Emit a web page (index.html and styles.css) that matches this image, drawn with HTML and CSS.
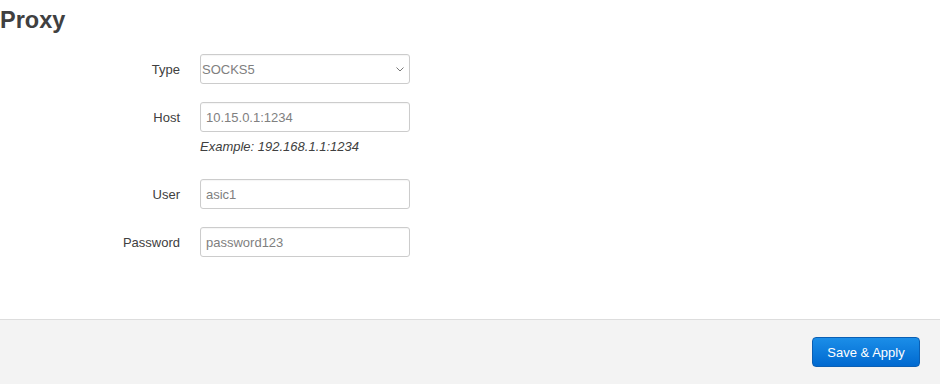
FILE: index.html
```html
<!DOCTYPE html>
<html lang="en">
<head>
  <meta charset="UTF-8">
  <meta name="viewport" content="width=device-width, initial-scale=1.0">
  <title>Proxy</title>
  <link rel="stylesheet" href="styles.css">
</head>
<body>
  <div class="page">

    <!-- Proxy settings -->
    <div class="section">
      <h2>Proxy</h2>

      <div class="form">
        <div class="row">
          <label for="type">Type</label>
          <div class="field">
            <div class="select-wrap">
              <select id="type">
                <option>SOCKS5</option>
                <option>HTTP</option>
              </select>
              <svg class="caret" width="8" height="5" viewBox="0 0 8 5"><path d="M0.5 0.5 L4 4 L7.5 0.5" fill="none" stroke="#777" stroke-width="1"/></svg>
            </div>
          </div>
        </div>

        <div class="row">
          <label for="host">Host</label>
          <div class="field">
            <input type="text" id="host" value="10.15.0.1:1234">
            <div class="hint">Example: 192.168.1.1:1234</div>
          </div>
        </div>

        <div class="row">
          <label for="user">User</label>
          <div class="field">
            <input type="text" id="user" value="asic1">
          </div>
        </div>

        <div class="row">
          <label for="password">Password</label>
          <div class="field">
            <input type="text" id="password" value="password123">
          </div>
        </div>
      </div>
    </div>

    <!-- Actions -->
    <div class="actions">
      <button type="button" class="btn-primary">Save &amp; Apply</button>
    </div>

  </div>
</body>
</html>
```

FILE: styles.css
```css
/* General styling */
* {
  margin: 0;
  padding: 0;
  box-sizing: border-box;
}

body, html {
  font-family: "Liberation Sans", Arial, sans-serif;
  font-size: 13px;
  color: #404040;
  background: #fff;
}

.page {
  width: 940px;
  height: 384px;
  display: flex;
  flex-direction: column;
}

/* Section */
.section {
  flex: 1;
}

.section h2 {
  font-size: 23.5px;
  font-weight: bold;
  color: #404040;
  line-height: 26px;
  padding-top: 7px;
}

.form {
  margin-top: 21px;
}

.row {
  display: flex;
  align-items: flex-start;
  margin-bottom: 18px;
}

.row label {
  width: 180px;
  height: 30px;
  text-align: right;
  line-height: 32px;
  color: #404040;
}

.field {
  margin-left: 20px;
  width: 210px;
}

/* Inputs */
.field input,
.field select {
  width: 210px;
  height: 30px;
  border: 1px solid #ccc;
  border-radius: 3px;
  background: #fff;
  font-family: inherit;
  font-size: 13px;
  color: #808080;
  box-shadow: inset 0 1px 1px rgba(0, 0, 0, 0.04);
}

.field input {
  padding: 0 5px;
}

.field select {
  appearance: none;
  -webkit-appearance: none;
  padding: 0 0 0 1px;
  outline: none;
}

.select-wrap {
  position: relative;
}

.caret {
  position: absolute;
  right: 6px;
  top: 13px;
  pointer-events: none;
}

.hint {
  margin-top: 7px;
  margin-bottom: 6px;
  font-style: italic;
  color: #404040;
  line-height: 16px;
}

/* Footer actions */
.actions {
  height: 65px;
  background: #f3f3f3;
  border-top: 1px solid #ddd;
  display: flex;
  justify-content: flex-end;
  align-items: flex-start;
  padding: 17px 20px 0 0;
}

.btn-primary {
  width: 108px;
  height: 30px;
  font-family: inherit;
  font-size: 13px;
  color: #fff;
  background: linear-gradient(to bottom, #1b8ee8, #0069d0);
  border: 1px solid #0a5fb4;
  border-radius: 4px;
  cursor: pointer;
}
```
